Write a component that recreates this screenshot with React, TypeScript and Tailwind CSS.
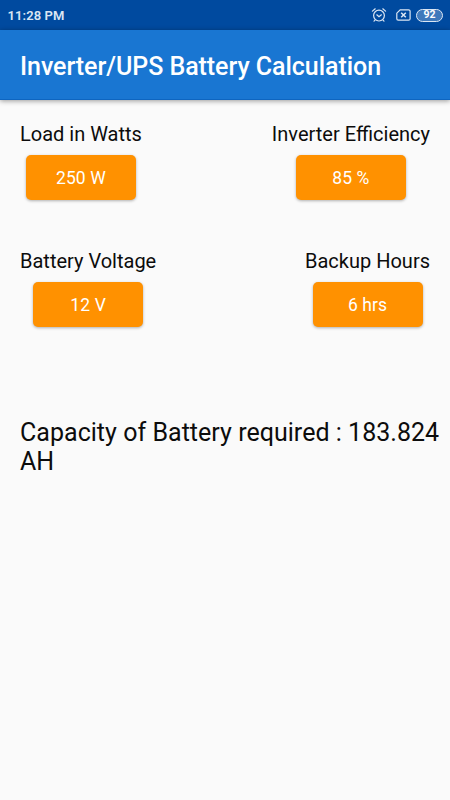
function Field({ label, value }: { label: string; value: string }) {
  return (
    <div className="flex flex-col items-center">
      <span className="h-6 text-[20px] leading-6 whitespace-nowrap text-[#0c0c0c]">{label}</span>
      <button className="mt-[8.500px] h-[45px] w-[110px] rounded-[5px] bg-[#ff9100] pt-[2px] text-[17.5px] leading-[43px] tracking-[0.1px] text-white shadow-[0_1px_3px_rgba(0,0,0,0.3)]">
        {value}
      </button>
    </div>
  );
}

function StatusBar() {
  return (
    <div className="flex h-[30px] items-center justify-between bg-[#004a9f] pr-[7px] pl-[7.500px] text-[#dbe6f3]">
      <span className="pt-[1px] text-[13px] leading-[28px] font-semibold tracking-[0.1px]">11:28 PM</span>
      <div className="flex items-center">
        <svg width="16" height="16" viewBox="0 0 16 16" fill="none" stroke="currentColor" strokeWidth="1.2" strokeLinecap="round">
          <circle cx="8" cy="8.6" r="5.4" />
          <path d="M1.4 4.1 4.2 1.8M11.8 1.8l2.8 2.3M5.8 7.8 8 9.8l2.4-2M4 13.2l-1 1M12 13.2l1 1" />
        </svg>
        <svg className="ml-[9px]" width="15" height="12" viewBox="0 0 15 12" fill="none" stroke="currentColor" strokeWidth="1.2">
          <path d="M4.2.8H12.6a1.5 1.5 0 0 1 1.5 1.5v7.4a1.5 1.5 0 0 1-1.5 1.5H2.3A1.5 1.5 0 0 1 .8 9.700V4.200Z" />
          <path d="m5.200 3.700 4.600 4.600M9.800 3.700l-4.600 4.600" strokeWidth="1.5" />
        </svg>
        <div className="ml-[5px] flex h-[13px] w-[27px] items-center justify-center rounded-full border border-[#dbe6f3] bg-[#3f79bb] pt-px text-[10.500px] leading-none font-bold text-white">
          92
        </div>
      </div>
    </div>
  );
}

export default function App() {
  return (
    <div className="h-[800px] w-[450px] overflow-hidden bg-[#fafafa] font-[Roboto,sans-serif]">
      <StatusBar />
      <header className="relative flex h-[70px] items-center border-b border-[#0e65c0] bg-[#1976d2] pl-5 shadow-[0_1px_5px_rgba(0,0,0,0.4)]">
        <h1 className="pt-[4px] text-[25px] leading-[30px] font-medium tracking-[-0.05px] whitespace-nowrap text-white">Inverter/UPS Battery Calculation</h1>
      </header>
      <main className="px-5 pt-[22px]">
        <div className="flex justify-between">
          <Field label="Load in Watts" value="250 W" />
          <Field label="Inverter Efficiency" value="85 %" />
        </div>
        <div className="mt-[49.500px] flex justify-between">
          <Field label="Battery Voltage" value="12 V" />
          <Field label="Backup Hours" value="6 hrs" />
        </div>
        <p className="-mr-5 mt-[91.500px] text-[25px] leading-[29.300px] tracking-[0.03px] text-[#0c0c0c]">
          Capacity of Battery required : 183.824 AH
        </p>
      </main>
    </div>
  );
}
